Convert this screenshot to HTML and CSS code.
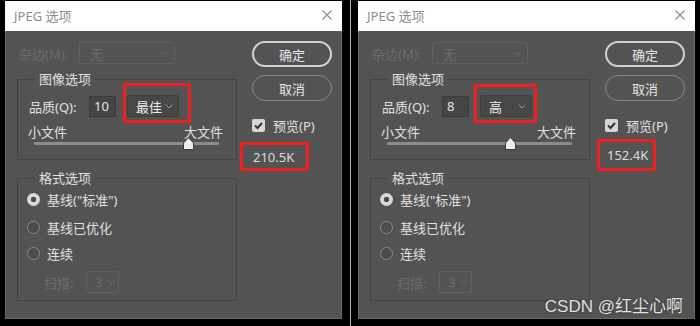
FILE: index.html
```html
<!DOCTYPE html>
<html lang="zh-CN">
<head>
    <meta charset="UTF-8">
    <meta name="viewport" content="width=device-width, initial-scale=1.0">
    <title>JPEG 选项</title>
    <link rel="stylesheet" href="styles.css">
</head>
<body>
    <div class="screen">
        <!-- first dialog: quality 10 -->
        <div class="dialog">
            <div class="titlebar">
                <span class="title">JPEG 选项</span>
                <svg class="close" width="10" height="10" viewBox="0 0 10 10"><path d="M0.5 0.5L9.5 9.5M9.5 0.5L0.5 9.5" stroke="#8c8c8c" stroke-width="1.1" fill="none"/></svg>
            </div>
            <div class="dialog-body">
                <div class="main-col">
                    <div class="matte-row">
                        <span class="matte-label">杂边(M):</span>
                        <div class="select select-disabled select-matte">
                            <span>无</span>
                            <svg class="chevron" width="8" height="5" viewBox="0 0 8 5"><polyline points="0.5,0.5 4,4 7.5,0.5" fill="none" stroke="#676767"/></svg>
                        </div>
                    </div>
                    <fieldset class="group group-image">
                        <legend>图像选项</legend>
                        <div class="quality-row">
                            <span class="quality-label">品质(Q):</span>
                            <div class="num-input">10</div>
                            <div class="select select-quality">
                                <span>最佳</span>
                                <svg class="chevron" width="8" height="5" viewBox="0 0 8 5"><polyline points="0.5,0.5 4,4 7.5,0.5" fill="none" stroke="#9a9a9a"/></svg>
                                <span class="mark mark-select-a"></span>
                            </div>
                        </div>
                        <div class="size-labels"><span>小文件</span><span>大文件</span></div>
                        <div class="slider">
                            <div class="track"></div>
                            <svg class="thumb" style="left: calc(83.33% - 5.5px)" width="11" height="13" viewBox="0 0 11 13"><polygon points="5.5,0.5 10.5,6 10.5,12.5 0.5,12.5 0.5,6" fill="#ececec" stroke="#3a3a3a"/></svg>
                        </div>
                    </fieldset>
                    <fieldset class="group group-format">
                        <legend>格式选项</legend>
                        <div class="radio-row row-1"><span class="radio checked"></span><span>基线("标准")</span></div>
                        <div class="radio-row row-2"><span class="radio"></span><span>基线已优化</span></div>
                        <div class="radio-row row-3"><span class="radio"></span><span>连续</span></div>
                        <div class="scan-row">
                            <span class="scan-label">扫描:</span>
                            <div class="select select-disabled select-scan">
                                <span>3</span>
                                <svg class="chevron" width="8" height="5" viewBox="0 0 8 5"><polyline points="0.5,0.5 4,4 7.5,0.5" fill="none" stroke="#676767"/></svg>
                            </div>
                        </div>
                    </fieldset>
                </div>
                <div class="side-col">
                    <button class="btn btn-primary">确定</button>
                    <button class="btn btn-secondary">取消</button>
                    <div class="preview-row">
                        <span class="checkbox"><svg width="13" height="13" viewBox="0 0 13 13"><polyline points="3,6.5 5.5,9 10,4" fill="none" stroke="#333" stroke-width="2"/></svg></span>
                        <span>预览(P)</span>
                    </div>
                    <div class="file-size size-a">210.5K</div>
                </div>
            </div>
        </div>

        <div class="divider"></div>

        <!-- second dialog: quality 8 -->
        <div class="dialog">
            <div class="titlebar">
                <span class="title">JPEG 选项</span>
                <svg class="close" width="10" height="10" viewBox="0 0 10 10"><path d="M0.5 0.5L9.5 9.5M9.5 0.5L0.5 9.5" stroke="#8c8c8c" stroke-width="1.1" fill="none"/></svg>
            </div>
            <div class="dialog-body">
                <div class="main-col">
                    <div class="matte-row">
                        <span class="matte-label">杂边(M):</span>
                        <div class="select select-disabled select-matte">
                            <span>无</span>
                            <svg class="chevron" width="8" height="5" viewBox="0 0 8 5"><polyline points="0.5,0.5 4,4 7.5,0.5" fill="none" stroke="#676767"/></svg>
                        </div>
                    </div>
                    <fieldset class="group group-image">
                        <legend>图像选项</legend>
                        <div class="quality-row">
                            <span class="quality-label">品质(Q):</span>
                            <div class="num-input">8</div>
                            <div class="select select-quality">
                                <span>高</span>
                                <svg class="chevron" width="8" height="5" viewBox="0 0 8 5"><polyline points="0.5,0.5 4,4 7.5,0.5" fill="none" stroke="#9a9a9a"/></svg>
                                <span class="mark mark-select-b"></span>
                            </div>
                        </div>
                        <div class="size-labels"><span>小文件</span><span>大文件</span></div>
                        <div class="slider">
                            <div class="track"></div>
                            <svg class="thumb" style="left: calc(66.67% - 5.5px)" width="11" height="13" viewBox="0 0 11 13"><polygon points="5.5,0.5 10.5,6 10.5,12.5 0.5,12.5 0.5,6" fill="#ececec" stroke="#3a3a3a"/></svg>
                        </div>
                    </fieldset>
                    <fieldset class="group group-format">
                        <legend>格式选项</legend>
                        <div class="radio-row row-1"><span class="radio checked"></span><span>基线("标准")</span></div>
                        <div class="radio-row row-2"><span class="radio"></span><span>基线已优化</span></div>
                        <div class="radio-row row-3"><span class="radio"></span><span>连续</span></div>
                        <div class="scan-row">
                            <span class="scan-label">扫描:</span>
                            <div class="select select-disabled select-scan">
                                <span>3</span>
                                <svg class="chevron" width="8" height="5" viewBox="0 0 8 5"><polyline points="0.5,0.5 4,4 7.5,0.5" fill="none" stroke="#676767"/></svg>
                            </div>
                        </div>
                    </fieldset>
                </div>
                <div class="side-col">
                    <button class="btn btn-primary">确定</button>
                    <button class="btn btn-secondary">取消</button>
                    <div class="preview-row">
                        <span class="checkbox"><svg width="13" height="13" viewBox="0 0 13 13"><polyline points="3,6.5 5.5,9 10,4" fill="none" stroke="#333" stroke-width="2"/></svg></span>
                        <span>预览(P)</span>
                    </div>
                    <div class="file-size size-b">152.4K</div>
                </div>
            </div>
            <div class="watermark">CSDN @红尘心啊</div>
        </div>
    </div>
</body>
</html>
```

FILE: styles.css
```css
* {
    margin: 0;
    padding: 0;
    box-sizing: border-box;
}
body {
    background: #000;
    font-family: "Noto Sans", "Noto Sans CJK SC", sans-serif;
    font-size: 13px;
    color: #e0e0e0;
    width: 700px;
    height: 326px;
    overflow: hidden;
}
.screen {
    display: flex;
    padding: 1px 0 0 5px;
}
.divider {
    width: 1px;
    height: 326px;
    margin: -1px 7px 0 8px;
    background: #b4b4b4;
}
.dialog {
    position: relative;
    width: 337px;
    height: 318px;
    display: flex;
    flex-direction: column;
}
.titlebar {
    height: 30px;
    background: #fff;
    display: flex;
    align-items: center;
    justify-content: space-between;
    padding: 0 10px 1px 9px;
}
.title {
    color: #8c8c8c;
    font-size: 13px;
    line-height: 16px;
}
.close {
    display: block;
    margin-top: -1px;
}
.dialog-body {
    flex: 1;
    background: #535353;
    border: 1px solid #6a6a6a;
    border-top: none;
    display: flex;
    padding-left: 11px;
    gap: 15px;
}
.main-col {
    width: 220px;
}
/* matte row */
.matte-row {
    display: flex;
    align-items: center;
    height: 22px;
    margin-top: 11px;
    color: #6c6c6c;
}
.matte-label {
    width: 62px;
    padding-left: 2px;
}
.select {
    position: relative;
    height: 22px;
    display: flex;
    align-items: center;
    justify-content: space-between;
    border-radius: 2px;
}
.select-disabled {
    border: 1px solid #606060;
    color: #6c6c6c;
}
.select-matte {
    width: 96px;
    padding: 0 5px 0 10px;
}
.select-scan {
    width: 33px;
    padding: 0 3px 0 8px;
}
.chevron {
    display: block;
}
/* groups */
.group {
    width: 220px;
    border: 1px solid #434343;
    margin: 0;
}
.group legend {
    margin-left: 17px;
    padding: 0 4px;
    line-height: 17px;
    font-size: 13px;
    color: #e0e0e0;
}
.group-image {
    margin-top: 7px;
    padding: 7px 0 12px 0;
}
.group-format {
    margin-top: 10px;
    padding: 0 0 7px 0;
}
.quality-row {
    display: flex;
    align-items: center;
    height: 22px;
    padding-left: 11px;
}
.quality-label {
    width: 60px;
}
.num-input {
    width: 27px;
    height: 21px;
    background: #454545;
    border: 1px solid #3a3a3a;
    padding-left: 4px;
    line-height: 19px;
    color: #e6e6e6;
}
.select-quality {
    width: 52px;
    margin-left: 11px;
    background: #474747;
    border: 1px solid #3d3d3d;
    padding: 0 5px 0 8px;
    color: #ececec;
}
/* red annotation frames */
.mark {
    position: absolute;
    border: 3px solid #f01e1e;
    border-radius: 2px;
}
.mark-select-a {
    top: -13px;
    left: -5px;
    right: -13px;
    bottom: -7px;
}
.mark-select-b {
    top: -12px;
    left: -7px;
    right: -6px;
    bottom: -7px;
}
.size-labels {
    display: flex;
    justify-content: space-between;
    padding: 0 13px 0 10px;
    margin-top: 7px;
    line-height: 16px;
}
.slider {
    position: relative;
    height: 7px;
    margin: 0 17px 0 16px;
}
.track {
    position: absolute;
    top: 2px;
    left: 0;
    right: 0;
    height: 3px;
    background: #8c8c8c;
    border-radius: 1px;
}
.thumb {
    position: absolute;
    top: -3px;
}
/* radios */
.radio-row {
    display: flex;
    align-items: center;
    height: 20px;
    padding-left: 9px;
    gap: 7px;
}
.row-1 { margin-top: 2px; }
.row-2 { margin-top: 8px; }
.row-3 { margin-top: 6px; }
.radio {
    width: 13px;
    height: 13px;
    border-radius: 50%;
    border: 1px solid #8a8a8a;
    background: #4c4c4c;
}
.radio.checked {
    border: none;
    background: radial-gradient(circle, #4a4a4a 0 2.5px, #d8d8d8 3px);
}
.scan-row {
    display: flex;
    align-items: center;
    height: 22px;
    margin-top: 8px;
    padding-left: 26px;
    color: #6c6c6c;
}
.scan-label {
    width: 42px;
}
/* side column */
.side-col {
    width: 80px;
    display: flex;
    flex-direction: column;
}
.btn {
    height: 26px;
    border-radius: 13px;
    background: transparent;
    color: #e6e6e6;
    font-family: inherit;
    font-size: 13px;
}
.btn-primary {
    margin-top: 10px;
    border: 2px solid #d2d2d2;
}
.btn-secondary {
    margin-top: 8px;
    border: 1.5px solid #8a8a8a;
}
.preview-row {
    display: flex;
    align-items: center;
    gap: 8px;
    height: 14px;
    margin-top: 17px;
}
.checkbox {
    width: 13px;
    height: 13px;
    border-radius: 2px;
    background: #d6d6d6;
}
.checkbox svg {
    display: block;
}
.file-size {
    border: 3px solid #f01e1e;
    border-radius: 2px;
    display: flex;
    align-items: center;
    color: #dcdcdc;
}
.size-a {
    width: 69px;
    height: 29px;
    margin: 10px 0 0 -12px;
    padding-left: 10px;
}
.size-b {
    width: 59px;
    height: 32px;
    margin: 7px 0 0 -8px;
    padding-left: 7px;
}
.watermark {
    position: absolute;
    right: 12px;
    bottom: 2px;
    font-family: "Liberation Sans", "Noto Sans CJK SC", sans-serif;
    font-size: 17px;
    color: #e2e2e2;
    text-shadow: 0 0 2px #2a2a2a;
}
```
